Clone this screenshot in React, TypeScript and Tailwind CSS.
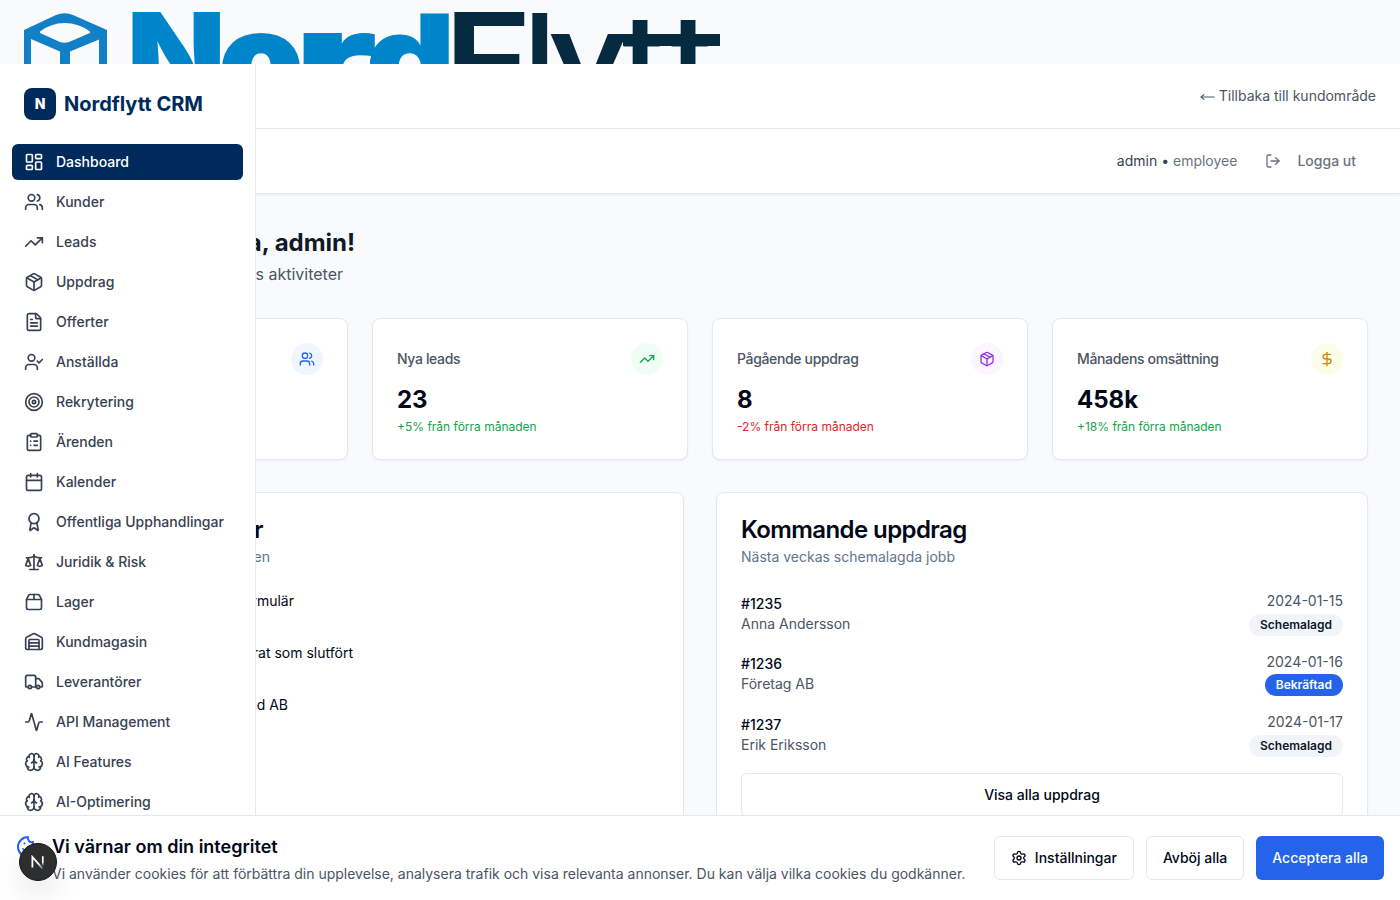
import type { ReactNode } from 'react';
import {
  Activity,
  Award,
  Brain,
  Calendar,
  ClipboardList,
  Cookie,
  DollarSign,
  FileText,
  LayoutDashboard,
  LogOut,
  Package,
  Package2,
  Scale,
  Settings,
  Target,
  TrendingUp,
  Truck,
  UserCheck,
  Users,
  Warehouse,
  type LucideIcon,
} from 'lucide-react';

const navItems: { label: string; icon: LucideIcon }[] = [
  { label: 'Dashboard', icon: LayoutDashboard },
  { label: 'Kunder', icon: Users },
  { label: 'Leads', icon: TrendingUp },
  { label: 'Uppdrag', icon: Package },
  { label: 'Offerter', icon: FileText },
  { label: 'Anställda', icon: UserCheck },
  { label: 'Rekrytering', icon: Target },
  { label: 'Ärenden', icon: ClipboardList },
  { label: 'Kalender', icon: Calendar },
  { label: 'Offentliga Upphandlingar', icon: Award },
  { label: 'Juridik & Risk', icon: Scale },
  { label: 'Lager', icon: Package2 },
  { label: 'Kundmagasin', icon: Warehouse },
  { label: 'Leverantörer', icon: Truck },
  { label: 'API Management', icon: Activity },
  { label: 'AI Features', icon: Brain },
  { label: 'AI-Optimering', icon: Brain },
];

const stats = [
  { label: 'Totalt kunder', value: '156', change: '+12% från förra månaden', up: true, icon: Users, tone: 'bg-[#eff6ff] text-[#2563eb]' },
  { label: 'Nya leads', value: '23', change: '+5% från förra månaden', up: true, icon: TrendingUp, tone: 'bg-[#f0fdf4] text-[#16a34a]' },
  { label: 'Pågående uppdrag', value: '8', change: '-2% från förra månaden', up: false, icon: Package, tone: 'bg-[#faf5ff] text-[#9333ea]' },
  { label: 'Månadens omsättning', value: '458k', change: '+18% från förra månaden', up: true, icon: DollarSign, tone: 'bg-[#fefce8] text-[#ca8a04]' },
];

const activities = [
  { text: 'Ny lead från kontaktformulär', time: '5 min sedan', width: 'w-[237px]' },
  { text: 'Uppdrag #1234 markerat som slutfört', time: '1 timme sedan', width: 'w-[296px]' },
  { text: 'Offert skickad till Nordstad AB', time: '2 timmar sedan', width: 'w-[231px]' },
];

const jobs = [
  { id: '#1235', name: 'Anna Andersson', date: '2024-01-15', status: 'Schemalagd', tone: 'bg-[#f1f5f9] text-[#0f172a]' },
  { id: '#1236', name: 'Företag AB', date: '2024-01-16', status: 'Bekräftad', tone: 'bg-[#2563eb] text-[#f8fafc]' },
  { id: '#1237', name: 'Erik Eriksson', date: '2024-01-17', status: 'Schemalagd', tone: 'bg-[#f1f5f9] text-[#0f172a]' },
];

function Logo() {
  return (
    <svg width="760" height="64" viewBox="0 0 760 64" className="block" role="img" aria-label="NordFlytt">
      <path
        fill="#1180c6"
        fillRule="evenodd"
        d="M24 30 56 15Q64.5 11.5 73 15L107 30V64H99V39.5L70 51.5V64H60V51.5L31 39V64H24ZM40 31.5Q51 23 64.5 23 79 23 90 31.5V33L69 42Q64.5 43.5 60 42L40 33Z"
      />
      <g fontFamily="Inter, sans-serif" fontSize="115.5" fontWeight="900" fill="#0085ca" stroke="#0085ca">
        <text x="126.5" y="96" strokeWidth="0" textLength="99.5" lengthAdjust="spacingAndGlyphs">N</text>
        <text x="219" y="103" fontSize="125" strokeWidth="2" textLength="84" lengthAdjust="spacingAndGlyphs">o</text>
        <text x="296" y="101" fontSize="122" strokeWidth="2" textLength="80" lengthAdjust="spacingAndGlyphs">r</text>
        <text x="366" y="99.5" fontSize="118.5" strokeWidth="1" textLength="89" lengthAdjust="spacingAndGlyphs">d</text>
      </g>
      <g fontFamily="Inter, sans-serif" fontSize="116.5" fontWeight="600" fill="#062b40">
        <text x="443.5" y="105" fontSize="128" textLength="88" lengthAdjust="spacingAndGlyphs">F</text>
        <text x="524.5" y="97.5">l</text>
        <text x="548" y="99" fontSize="119" textLength="81" lengthAdjust="spacingAndGlyphs">y</text>
        <text x="622.5" y="99">t</text>
        <text x="670.5" y="99">t</text>
      </g>
      <path fill="#062b40" d="M623 34H720V46H623Z" />
    </svg>
  );
}

function Sidebar() {
  return (
    <aside className="absolute top-0 left-0 z-10 flex h-full w-64 flex-col border-r border-[#e5e7eb] bg-white">
      <div className="flex h-20 shrink-0 items-center gap-2 px-6">
        <div className="flex size-8 items-center justify-center rounded-lg bg-[#002a5c] text-sm font-extrabold text-white">N</div>
        <span className="text-xl font-bold text-[#002a5c]">Nordflytt CRM</span>
      </div>
      <nav className="flex flex-col gap-1 px-3">
        {navItems.map(({ label, icon: Icon }, i) => (
          <a
            key={label}
            className={`flex h-9 shrink-0 items-center gap-3 rounded-md px-3 text-sm font-medium ${i === 0 ? 'bg-[#002a5c] text-white' : 'text-[#374151]'}`}
          >
            <Icon className="size-5 shrink-0" />
            {label}
          </a>
        ))}
      </nav>
    </aside>
  );
}

function Panel({ title, subtitle, children }: { title: ReactNode; subtitle: ReactNode; children: ReactNode }) {
  return (
    <section className="h-[420px] rounded-lg border border-[#e2e8f0] bg-white p-6 shadow-xs">
      <h3 className="translate-y-px text-2xl leading-none font-semibold tracking-tight text-[#020817]">{title}</h3>
      <p className="mt-1.5 mb-6 text-sm text-[#64748b]">{subtitle}</p>
      {children}
    </section>
  );
}

function CookieBanner() {
  return (
    <div className="absolute inset-x-0 bottom-0 z-20 flex h-[85px] items-center justify-between border-t border-[#e2e8f0] bg-white px-4">
      <div className="flex gap-3">
        <Cookie className="mt-[3px] size-6 shrink-0 text-[#2563eb]" />
        <div>
          <h2 className="translate-y-px text-lg leading-7 font-semibold text-[#020817]">Vi värnar om din integritet</h2>
          <p className="mt-1 text-sm text-[#4b5563]">
            Vi använder cookies för att förbättra din upplevelse, analysera trafik och visa relevanta annonser. Du kan välja vilka cookies du godkänner.
          </p>
        </div>
      </div>
      <div className="flex gap-3 text-sm font-medium text-[#020817]">
        <button className="flex h-11 items-center gap-2 rounded-md border border-[#e2e8f0] bg-white px-4">
          <Settings className="size-4" />
          Inställningar
        </button>
        <button className="h-11 rounded-md border border-[#e2e8f0] bg-white px-4">Avböj alla</button>
        <button className="h-11 rounded-md bg-[#2563eb] px-4 text-[#f8fafc]">Acceptera alla</button>
      </div>
    </div>
  );
}

function DevBadge() {
  return (
    <div className="absolute bottom-[19px] left-[19px] z-30 flex size-[38px] items-center justify-center rounded-full border border-[#171717] bg-[#2d2e2f] shadow-[0_16px_32px_-8px_rgba(0,0,0,0.24)]">
      <svg width="14" height="14" viewBox="0 0 14 14" fill="none">
        <defs>
          <linearGradient id="stem" x1="0" y1="1" x2="0" y2="11" gradientUnits="userSpaceOnUse">
            <stop stopColor="#fff" />
            <stop offset="0.6" stopColor="#fff" />
            <stop offset="1" stopColor="#fff" stopOpacity="0" />
          </linearGradient>
          <linearGradient id="diagonal" x1="8" y1="8" x2="12.5" y2="13.5" gradientUnits="userSpaceOnUse">
            <stop stopColor="#fff" />
            <stop offset="1" stopColor="#fff" stopOpacity="0.2" />
          </linearGradient>
        </defs>
        <path d="M1.4 12.6V2L11.6 13.6" stroke="url(#diagonal)" strokeWidth="1.8" />
        <path d="M11.8 1.2V11.5" stroke="url(#stem)" strokeWidth="1.7" />
      </svg>
    </div>
  );
}

export default function App() {
  return (
    <div className="relative flex h-[900px] w-full flex-col overflow-hidden bg-[#f9fafb] font-['Inter',sans-serif] antialiased">
      <header className="h-16 shrink-0 overflow-hidden bg-[#f9fafc]">
        <Logo />
      </header>
      <div className="relative min-h-0 flex-1">
        <Sidebar />
        <div className="flex h-[65px] items-center justify-end gap-1 border-b border-[#e5e7eb] bg-white px-6 text-sm text-[#4b5563]">
          <svg width="15" height="8" viewBox="0 0 15 8" className="mt-0.5" fill="none" stroke="currentColor">
            <path d="M1.5 4H14.5" strokeWidth="1" />
            <path d="M4.2 1.4 1 4 4.2 6.6" strokeWidth="1.2" />
          </svg>
          <span>Tillbaka till kundområde</span>
        </div>
        <div className="flex h-[65px] items-center justify-end border-b border-[#e5e7eb] bg-white pr-11 text-sm shadow-xs">
          <span className="text-[#374151]">
            admin • <span className="text-[#6b7280]">employee</span>
          </span>
          <button className="ml-7 flex items-center gap-4 font-medium text-[#6b7280]">
            <LogOut className="size-4" />
            Logga ut
          </button>
        </div>
        <main className="p-8">
          <h1 className="w-[323px] translate-y-px text-right text-2xl font-bold whitespace-nowrap text-[#111827]">Välkommen tillbaka, admin!</h1>
          <p className="mt-1 w-[311px] text-right whitespace-nowrap text-[#4b5563]">Här är en översikt av dagens aktiviteter</p>
          <div className="mt-8 grid grid-cols-4 gap-6">
            {stats.map(({ label, value, change, up, icon: Icon, tone }) => (
              <div key={label} className="rounded-lg border border-[#e2e8f0] bg-white p-6 shadow-xs">
                <div className="flex items-center justify-between">
                  <span className="text-sm font-medium tracking-tight text-[#4b5563]">{label}</span>
                  <span className={`flex size-8 items-center justify-center rounded-full ${tone}`}>
                    <Icon className="size-4" />
                  </span>
                </div>
                <div className="mt-2 translate-y-px text-2xl font-bold text-[#020817]">{value}</div>
                <div className={`mt-1 text-xs ${up ? 'text-[#16a34a]' : 'text-[#dc2626]'}`}>{change}</div>
              </div>
            ))}
          </div>
          <div className="mt-8 grid grid-cols-2 gap-8">
            <Panel
              title={<span className="block w-[206px] text-right whitespace-nowrap">Senaste aktiviteter</span>}
              subtitle={<span className="block w-[213px] text-right whitespace-nowrap">Senaste händelser i systemen</span>}
            >
              <div className="flex flex-col gap-4">
                {activities.map((a) => (
                  <div key={a.text}>
                    <p className={`text-right text-sm whitespace-nowrap text-[#020817] ${a.width}`}>{a.text}</p>
                    <p className="text-xs text-[#6b7280]">{a.time}</p>
                  </div>
                ))}
              </div>
            </Panel>
            <Panel title="Kommande uppdrag" subtitle="Nästa veckas schemalagda jobb">
              <div className="flex flex-col gap-4">
                {jobs.map((job) => (
                  <div key={job.id} className="flex h-[44.5px] items-center justify-between text-sm">
                    <div className="pt-px">
                      <p className="font-medium text-[#020817]">{job.id}</p>
                      <p className="text-[#4b5563]">{job.name}</p>
                    </div>
                    <div className="flex flex-col items-end gap-[2.5px]">
                      <p className="text-[#4b5563]">{job.date}</p>
                      <span className={`flex h-[22px] items-center rounded-full px-[11px] text-xs font-semibold ${job.tone}`}>{job.status}</span>
                    </div>
                  </div>
                ))}
                <button className="h-11 w-full rounded-md border border-[#e2e8f0] bg-white text-sm font-medium text-[#020817]">
                  Visa alla uppdrag
                </button>
              </div>
            </Panel>
          </div>
        </main>
      </div>
      <CookieBanner />
      <DevBadge />
    </div>
  );
}
